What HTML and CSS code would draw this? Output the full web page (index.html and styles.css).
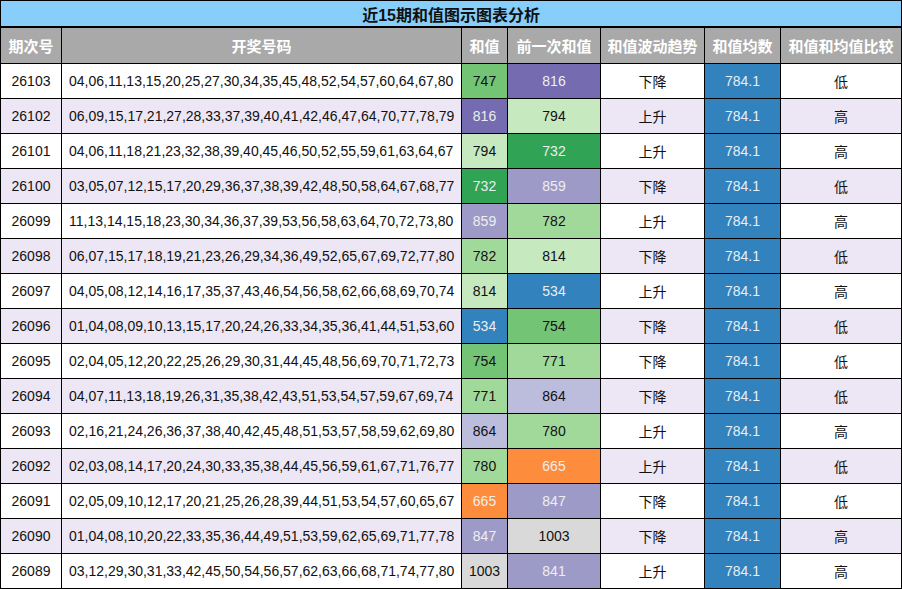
FILE: index.html
```html
<!DOCTYPE html>
<html lang="zh">
<head>
<meta charset="utf-8">
<link rel="stylesheet" href="styles.css">
</head>
<body>
<table class="chart">
<colgroup>
<col class="c1"><col class="c2"><col class="c3"><col class="c4"><col class="c5"><col class="c6"><col class="c7">
</colgroup>
<thead>
<tr class="title-row"><th colspan="7">近15期和值图示图表分析</th></tr>
<tr class="head-row"><th>期次号</th><th>开奖号码</th><th>和值</th><th>前一次和值</th><th>和值波动趋势</th><th>和值均数</th><th>和值和均值比较</th></tr>
</thead>
<tbody>
<tr><td>26103</td><td class="nums">04,06,11,13,15,20,25,27,30,34,35,45,48,52,54,57,60,64,67,80</td><td class="g2">747</td><td class="p1 lt">816</td><td>下降</td><td class="avg">784.1</td><td>低</td></tr>
<tr class="alt"><td>26102</td><td class="nums">06,09,15,17,21,27,28,33,37,39,40,41,42,46,47,64,70,77,78,79</td><td class="p1 lt">816</td><td class="g4">794</td><td>上升</td><td class="avg">784.1</td><td>高</td></tr>
<tr><td>26101</td><td class="nums">04,06,11,18,21,23,32,38,39,40,45,46,50,52,55,59,61,63,64,67</td><td class="g4">794</td><td class="g1 lt">732</td><td>上升</td><td class="avg">784.1</td><td>高</td></tr>
<tr class="alt"><td>26100</td><td class="nums">03,05,07,12,15,17,20,29,36,37,38,39,42,48,50,58,64,67,68,77</td><td class="g1 lt">732</td><td class="p2 lt">859</td><td>下降</td><td class="avg">784.1</td><td>低</td></tr>
<tr><td>26099</td><td class="nums">11,13,14,15,18,23,30,34,36,37,39,53,56,58,63,64,70,72,73,80</td><td class="p2 lt">859</td><td class="g3">782</td><td>上升</td><td class="avg">784.1</td><td>高</td></tr>
<tr class="alt"><td>26098</td><td class="nums">06,07,15,17,18,19,21,23,26,29,34,36,49,52,65,67,69,72,77,80</td><td class="g3">782</td><td class="g4">814</td><td>下降</td><td class="avg">784.1</td><td>低</td></tr>
<tr><td>26097</td><td class="nums">04,05,08,12,14,16,17,35,37,43,46,54,56,58,62,66,68,69,70,74</td><td class="g4">814</td><td class="b1 lt">534</td><td>上升</td><td class="avg">784.1</td><td>高</td></tr>
<tr class="alt"><td>26096</td><td class="nums">01,04,08,09,10,13,15,17,20,24,26,33,34,35,36,41,44,51,53,60</td><td class="b1 lt">534</td><td class="g2">754</td><td>下降</td><td class="avg">784.1</td><td>低</td></tr>
<tr><td>26095</td><td class="nums">02,04,05,12,20,22,25,26,29,30,31,44,45,48,56,69,70,71,72,73</td><td class="g2">754</td><td class="g3">771</td><td>下降</td><td class="avg">784.1</td><td>低</td></tr>
<tr class="alt"><td>26094</td><td class="nums">04,07,11,13,18,19,26,31,35,38,42,43,51,53,54,57,59,67,69,74</td><td class="g3">771</td><td class="p3">864</td><td>下降</td><td class="avg">784.1</td><td>低</td></tr>
<tr><td>26093</td><td class="nums">02,16,21,24,26,36,37,38,40,42,45,48,51,53,57,58,59,62,69,80</td><td class="p3">864</td><td class="g3">780</td><td>上升</td><td class="avg">784.1</td><td>高</td></tr>
<tr class="alt"><td>26092</td><td class="nums">02,03,08,14,17,20,24,30,33,35,38,44,45,56,59,61,67,71,76,77</td><td class="g3">780</td><td class="o1 lt">665</td><td>上升</td><td class="avg">784.1</td><td>低</td></tr>
<tr><td>26091</td><td class="nums">02,05,09,10,12,17,20,21,25,26,28,39,44,51,53,54,57,60,65,67</td><td class="o1 lt">665</td><td class="p2 lt">847</td><td>下降</td><td class="avg">784.1</td><td>低</td></tr>
<tr class="alt"><td>26090</td><td class="nums">01,04,08,10,20,22,33,35,36,44,49,51,53,59,62,65,69,71,77,78</td><td class="p2 lt">847</td><td class="gr">1003</td><td>下降</td><td class="avg">784.1</td><td>高</td></tr>
<tr><td>26089</td><td class="nums">03,12,29,30,31,33,42,45,50,54,56,57,62,63,66,68,71,74,77,80</td><td class="gr">1003</td><td class="p2 lt">841</td><td>上升</td><td class="avg">784.1</td><td>高</td></tr>
</tbody>
</table>
</body>
</html>
```
FILE: styles.css
```css
html, body {
  margin: 0;
  padding: 0;
  background: #ffffff;
}
body {
  font-family: "Liberation Sans", Arial, "Noto Sans CJK SC", sans-serif;
  color: #111;
}
.chart {
  width: 901px;
  border-collapse: collapse;
  table-layout: fixed;
  font-size: 14px;
}
.c1 { width: 61px; }
.c2 { width: 400px; }
.c3 { width: 46px; }
.c4 { width: 93px; }
.c5 { width: 104px; }
.c6 { width: 76px; }
.c7 { width: 121px; }
.chart th, .chart td {
  border: 1px solid #000;
  text-align: center;
  padding: 0;
  white-space: nowrap;
  overflow: hidden;
}
.title-row th {
  background: #87cefa;
  height: 25px;
  font-size: 16px;
  font-weight: bold;
  color: #111;
  border-bottom: 2px solid #000;
}
.head-row th {
  background: #a9a9a9;
  color: #fff;
  height: 35px;
  font-size: 15px;
  font-weight: bold;
}
.chart td {
  height: 34px;
}
.alt td {
  background: #ece6f5;
}
.chart td.nums {
  text-align: left;
  padding-left: 7px;
}
.chart td.g1 { background: #31a354; }
.chart td.g2 { background: #74c476; }
.chart td.g3 { background: #a1d99b; }
.chart td.g4 { background: #c7e9c0; }
.chart td.p1 { background: #756bb1; }
.chart td.p2 { background: #9e9ac8; }
.chart td.p3 { background: #bcbddc; }
.chart td.b1 { background: #3182bd; }
.chart td.o1 { background: #fd8d3c; }
.chart td.gr { background: #d9d9d9; }
.chart td.avg { background: #3182bd; color: #e8eef6; }
.chart td.lt { color: #eeeeee; }
```
